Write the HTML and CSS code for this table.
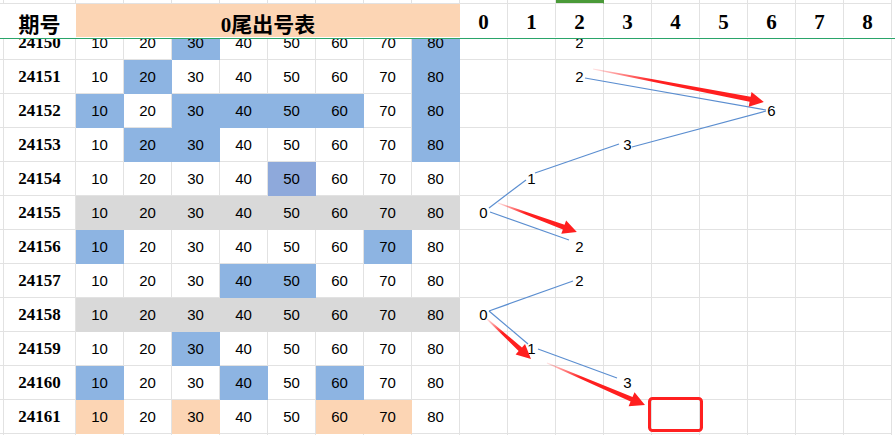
FILE: index.html
```html
<!DOCTYPE html>
<html lang="zh">
<head>
<meta charset="utf-8">
<title>0尾出号表</title>
<link rel="stylesheet" href="styles.css">
</head>
<body>
<div class="sheet">
  <div class="row strip">
    <div class="pad"></div><div class="lbl"></div>
    <div class="c"></div><div class="c"></div><div class="c"></div><div class="c"></div><div class="c"></div><div class="c"></div><div class="c"></div><div class="c"></div>
    <div class="c"></div><div class="c"></div><div class="c sel"></div><div class="c"></div><div class="c"></div><div class="c"></div><div class="c"></div><div class="c"></div><div class="c"></div>
  </div>
  <div class="row head">
    <div class="pad"></div><div class="lbl">期号</div>
    <div class="title">0尾出号表</div>
    <div class="c">0</div><div class="c">1</div><div class="c">2</div><div class="c">3</div><div class="c">4</div><div class="c">5</div><div class="c">6</div><div class="c">7</div><div class="c">8</div>
  </div>
  <div class="body">
    <div class="rows">
      <div class="row">
        <div class="pad"></div><div class="lbl">24150</div>
        <div class="c">10</div><div class="c">20</div><div class="c b">30</div><div class="c">40</div><div class="c">50</div><div class="c">60</div><div class="c">70</div><div class="c b">80</div>
        <div class="c"></div><div class="c"></div><div class="c">2</div><div class="c"></div><div class="c"></div><div class="c"></div><div class="c"></div><div class="c"></div><div class="c"></div>
      </div>
      <div class="row">
        <div class="pad"></div><div class="lbl">24151</div>
        <div class="c">10</div><div class="c b">20</div><div class="c">30</div><div class="c">40</div><div class="c">50</div><div class="c">60</div><div class="c">70</div><div class="c b">80</div>
        <div class="c"></div><div class="c"></div><div class="c">2</div><div class="c"></div><div class="c"></div><div class="c"></div><div class="c"></div><div class="c"></div><div class="c"></div>
      </div>
      <div class="row">
        <div class="pad"></div><div class="lbl">24152</div>
        <div class="c b">10</div><div class="c">20</div><div class="c b">30</div><div class="c b">40</div><div class="c b">50</div><div class="c b">60</div><div class="c">70</div><div class="c b">80</div>
        <div class="c"></div><div class="c"></div><div class="c"></div><div class="c"></div><div class="c"></div><div class="c"></div><div class="c">6</div><div class="c"></div><div class="c"></div>
      </div>
      <div class="row">
        <div class="pad"></div><div class="lbl">24153</div>
        <div class="c">10</div><div class="c b">20</div><div class="c b">30</div><div class="c">40</div><div class="c">50</div><div class="c">60</div><div class="c">70</div><div class="c b">80</div>
        <div class="c"></div><div class="c"></div><div class="c"></div><div class="c">3</div><div class="c"></div><div class="c"></div><div class="c"></div><div class="c"></div><div class="c"></div>
      </div>
      <div class="row">
        <div class="pad"></div><div class="lbl">24154</div>
        <div class="c">10</div><div class="c">20</div><div class="c">30</div><div class="c">40</div><div class="c b2">50</div><div class="c">60</div><div class="c">70</div><div class="c">80</div>
        <div class="c"></div><div class="c">1</div><div class="c"></div><div class="c"></div><div class="c"></div><div class="c"></div><div class="c"></div><div class="c"></div><div class="c"></div>
      </div>
      <div class="row">
        <div class="pad"></div><div class="lbl">24155</div>
        <div class="c g">10</div><div class="c g">20</div><div class="c g">30</div><div class="c g">40</div><div class="c g">50</div><div class="c g">60</div><div class="c g">70</div><div class="c g">80</div>
        <div class="c">0</div><div class="c"></div><div class="c"></div><div class="c"></div><div class="c"></div><div class="c"></div><div class="c"></div><div class="c"></div><div class="c"></div>
      </div>
      <div class="row">
        <div class="pad"></div><div class="lbl">24156</div>
        <div class="c b">10</div><div class="c">20</div><div class="c">30</div><div class="c">40</div><div class="c">50</div><div class="c">60</div><div class="c b">70</div><div class="c">80</div>
        <div class="c"></div><div class="c"></div><div class="c">2</div><div class="c"></div><div class="c"></div><div class="c"></div><div class="c"></div><div class="c"></div><div class="c"></div>
      </div>
      <div class="row">
        <div class="pad"></div><div class="lbl">24157</div>
        <div class="c">10</div><div class="c">20</div><div class="c">30</div><div class="c b">40</div><div class="c b">50</div><div class="c">60</div><div class="c">70</div><div class="c">80</div>
        <div class="c"></div><div class="c"></div><div class="c">2</div><div class="c"></div><div class="c"></div><div class="c"></div><div class="c"></div><div class="c"></div><div class="c"></div>
      </div>
      <div class="row">
        <div class="pad"></div><div class="lbl">24158</div>
        <div class="c g">10</div><div class="c g">20</div><div class="c g">30</div><div class="c g">40</div><div class="c g">50</div><div class="c g">60</div><div class="c g">70</div><div class="c g">80</div>
        <div class="c">0</div><div class="c"></div><div class="c"></div><div class="c"></div><div class="c"></div><div class="c"></div><div class="c"></div><div class="c"></div><div class="c"></div>
      </div>
      <div class="row">
        <div class="pad"></div><div class="lbl">24159</div>
        <div class="c">10</div><div class="c">20</div><div class="c b">30</div><div class="c">40</div><div class="c">50</div><div class="c">60</div><div class="c">70</div><div class="c">80</div>
        <div class="c"></div><div class="c">1</div><div class="c"></div><div class="c"></div><div class="c"></div><div class="c"></div><div class="c"></div><div class="c"></div><div class="c"></div>
      </div>
      <div class="row">
        <div class="pad"></div><div class="lbl">24160</div>
        <div class="c b">10</div><div class="c">20</div><div class="c">30</div><div class="c b">40</div><div class="c">50</div><div class="c b">60</div><div class="c">70</div><div class="c">80</div>
        <div class="c"></div><div class="c"></div><div class="c"></div><div class="c">3</div><div class="c"></div><div class="c"></div><div class="c"></div><div class="c"></div><div class="c"></div>
      </div>
      <div class="row">
        <div class="pad"></div><div class="lbl">24161</div>
        <div class="c p">10</div><div class="c">20</div><div class="c p">30</div><div class="c">40</div><div class="c">50</div><div class="c p">60</div><div class="c p">70</div><div class="c">80</div>
        <div class="c"></div><div class="c"></div><div class="c"></div><div class="c"></div><div class="c"></div><div class="c"></div><div class="c"></div><div class="c"></div><div class="c"></div>
      </div>
      <div class="row">
        <div class="pad"></div><div class="lbl"></div>
        <div class="c"></div><div class="c"></div><div class="c"></div><div class="c"></div><div class="c"></div><div class="c"></div><div class="c"></div><div class="c"></div>
        <div class="c"></div><div class="c"></div><div class="c"></div><div class="c"></div><div class="c"></div><div class="c"></div><div class="c"></div><div class="c"></div><div class="c"></div>
      </div>
    </div>
  </div>

  <svg class="overlay" width="895" height="435" viewBox="0 0 895 435" aria-hidden="true">
    <defs>
      <linearGradient id="fade" x1="0" y1="0" x2="1" y2="0">
        <stop offset="0" stop-color="#ff1f1f" stop-opacity="0.12"/>
        <stop offset="0.35" stop-color="#ff1f1f" stop-opacity="1"/>
        <stop offset="1" stop-color="#ff1f1f" stop-opacity="1"/>
      </linearGradient>
    </defs>
    <g class="trend">
      <line x1="585" y1="78" x2="766" y2="110"/>
      <line x1="766" y1="111" x2="632" y2="147"/>
      <line x1="619" y1="144" x2="535" y2="173"/>
      <line x1="526" y1="180" x2="489" y2="208"/>
      <line x1="490" y1="212" x2="569" y2="240"/>
      <line x1="573" y1="281" x2="489" y2="311"/>
      <line x1="489" y1="311" x2="528" y2="344"/>
      <line x1="538" y1="349" x2="617" y2="378"/>
    </g>
    <g transform="translate(593,69) rotate(10.92)">
      <polygon fill="url(#fade)" points="0,-0.5 160,-2.6 160,-7.5 174,0 160,7.5 160,2.6 0,0.5"/>
    </g>
    <g transform="translate(498,203) rotate(20.16)">
      <polygon fill="url(#fade)" points="0,-0.5 70,-2.5 70,-7 84,0 70,7 70,2.5 0,0.5"/>
    </g>
    <g transform="translate(487,319) rotate(42.27)">
      <polygon fill="url(#fade)" points="0,-0.6 45,-2.5 45,-7 59.5,0 45,7 45,2.5 0,0.6"/>
    </g>
    <g transform="translate(547,363) rotate(23.2)">
      <polygon fill="url(#fade)" points="0,-0.5 92,-2.5 92,-7.5 106.6,0 92,7.5 92,2.5 0,0.5"/>
    </g>
    <rect class="mark" x="649.5" y="398.5" width="52" height="32" rx="3" ry="3"/>
  </svg>
</div>
</body>
</html>
```

FILE: styles.css
```css
html, body {
  margin: 0;
  padding: 0;
  background: #ffffff;
  overflow: hidden;
}

.sheet {
  position: relative;
  width: 895px;
  height: 435px;
  overflow: hidden;
  background: #ffffff;
}

.row {
  display: flex;
}

.row > div {
  box-sizing: border-box;
  flex: none;
}

.pad {
  width: 4px;
  border-right: 1px solid #e2e2e2;
  border-bottom: 1px solid #e2e2e2;
}

.lbl {
  width: 72px;
  border-right: 1px solid #e2e2e2;
  border-bottom: 1px solid #e2e2e2;
  text-align: center;
  font-family: "Liberation Serif", "Noto Sans CJK SC", serif;
  font-weight: bold;
  font-size: 17px;
  color: #000;
}

.c {
  width: 48px;
  border-right: 1px solid #e2e2e2;
  border-bottom: 1px solid #e2e2e2;
  text-align: center;
  font-family: "Liberation Sans", "Noto Sans CJK SC", sans-serif;
  font-size: 15px;
  color: #000;
}

/* thin strip above the header */
.strip > div {
  height: 4px;
}

.strip .sel {
  background: #4a9a38;
  border-right-color: #4a9a38;
  border-bottom-color: #e2e2e2;
}

/* frozen header */
.head {
  height: 34px;
  border-bottom: 1px solid #2aa56a;
}

.head > div {
  height: 33px;
  border-bottom: none;
  display: flex;
  align-items: center;
  justify-content: center;
  padding-top: 4px;
}

.head .pad {
  border-right-color: #ffffff;
}

.head .lbl {
  font-family: "Liberation Serif", "Noto Sans CJK SC", serif;
  font-size: 21px;
  font-weight: bold;
  border-right-color: #ffffff;
}

.head .title {
  width: 384px;
  background: #fcd5b4;
  font-family: "Liberation Serif", "Noto Sans CJK SC", serif;
  font-size: 21px;
  font-weight: bold;
  color: #000;
}

.head .c {
  font-family: "Liberation Serif", serif;
  font-size: 21px;
  font-weight: bold;
}

/* scrolled body */
.body {
  height: 397px;
  overflow: hidden;
}

.rows {
  margin-top: -13px;
}

.rows .row > div {
  height: 34px;
  line-height: 33px;
}

.c.b {
  background: #8db4e2;
  border-color: #8db4e2;
}

.c.b2 {
  background: #8ea9db;
  border-color: #8ea9db;
}

.c.g {
  background: #d9d9d9;
  border-color: #d9d9d9;
}

.c.p {
  background: #fcd5b4;
  border-color: #fcd5b4;
}

/* drawing overlay */
.overlay {
  position: absolute;
  left: 0;
  top: 0;
  pointer-events: none;
}

.trend line {
  stroke: #5b8ed0;
  stroke-width: 1.2;
  fill: none;
}

.mark {
  fill: none;
  stroke: #ff2020;
  stroke-width: 3;
}
```
